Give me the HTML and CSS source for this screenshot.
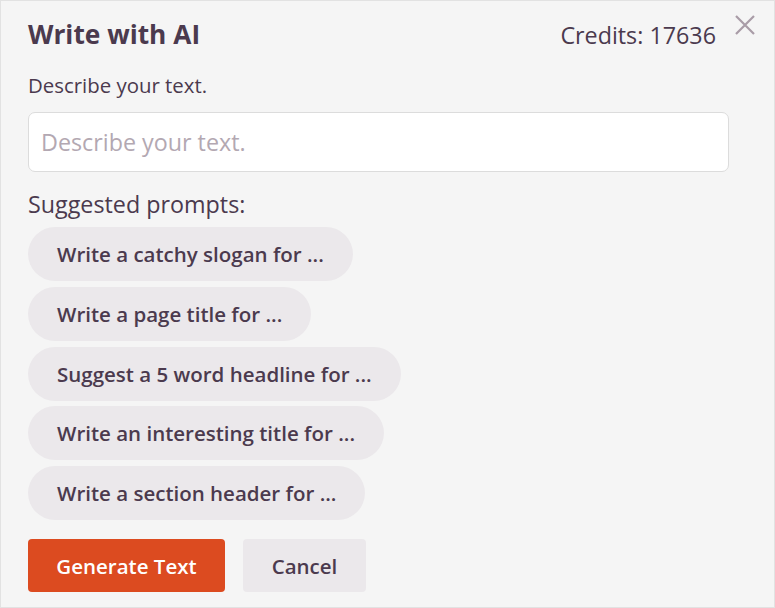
FILE: index.html
```html
<!DOCTYPE html>
<html>
<head>
<meta charset="utf-8">
<link rel="stylesheet" href="styles.css">
</head>
<body>
<div class="panel">
  <div class="header">
    <h1 class="title">Write with AI</h1>
    <div class="credits">Credits: 17636</div>
  </div>
  <button class="close" aria-label="Close">
    <svg width="22" height="22" viewBox="0 0 22 22"><path d="M2 2 L20 20 M20 2 L2 20" stroke="#a99ca7" stroke-width="2.2" fill="none"/></svg>
  </button>
  <label class="label">Describe your text.</label>
  <input class="input" type="text" placeholder="Describe your text.">
  <div class="suggest-label">Suggested prompts:</div>
  <div class="chips">
    <button class="chip">Write a catchy slogan for ...</button>
    <button class="chip">Write a page title for ...</button>
    <button class="chip">Suggest a 5 word headline for ...</button>
    <button class="chip">Write an interesting title for ...</button>
    <button class="chip">Write a section header for ...</button>
  </div>
  <div class="actions">
    <button class="btn primary">Generate Text</button>
    <button class="btn secondary">Cancel</button>
  </div>
</div>
</body>
</html>
```

FILE: styles.css
```css
html, body {
  margin: 0;
  padding: 0;
}
body {
  background: #f5f5f5;
  font-family: "Open Sans", "Noto Sans", sans-serif;
  color: #4b3a4e;
}
.panel {
  position: relative;
  box-sizing: border-box;
  width: 775px;
  height: 608px;
  border: 1px solid #e2e2e2;
  background: #f5f5f5;
  padding: 15px 46px 0 27px;
  display: flex;
  flex-direction: column;
}
.header {
  display: flex;
  justify-content: space-between;
  align-items: baseline;
  padding-right: 12px;
}
.title {
  margin: 0;
  font-size: 26.3px;
  font-weight: 700;
  line-height: 36px;
  color: #4b3a4e;
}
.credits {
  font-size: 23.3px;
  line-height: 36px;
  color: #4b3a4e;
}
.close {
  position: absolute;
  top: 13px;
  right: 18px;
  border: 0;
  background: transparent;
  padding: 0;
  width: 22px;
  height: 22px;
  cursor: pointer;
}
.close svg { display: block; }
.label {
  margin-top: 19px;
  font-size: 20.4px;
  line-height: 26px;
  color: #4b3a4e;
}
.input {
  margin-top: 14px;
  box-sizing: border-box;
  width: 701px;
  height: 60px;
  border: 1px solid #dcdcdc;
  border-radius: 7px;
  background: #fff;
  padding: 0 12px;
  font-family: "Open Sans", "Noto Sans", sans-serif;
  font-size: 23.3px;
  color: #4b3a4e;
  outline: none;
}
.input::placeholder {
  color: #b3a8b2;
}
.suggest-label {
  margin-top: 16px;
  font-size: 23.3px;
  line-height: 32px;
}
.chips {
  margin-top: 7px;
  display: flex;
  flex-direction: column;
  align-items: flex-start;
  gap: 5.75px;
}
.chip {
  height: 54px;
  border: 0;
  border-radius: 27px;
  background: #ebe8eb;
  padding: 0 29px;
  font-family: "Open Sans", "Noto Sans", sans-serif;
  font-size: 20.5px;
  font-weight: 600;
  color: #4b3a4e;
  cursor: pointer;
}
.actions {
  margin-top: 19px;
  display: flex;
  gap: 18px;
}
.btn {
  height: 53px;
  border: 0;
  border-radius: 4px;
  font-family: "Open Sans", "Noto Sans", sans-serif;
  font-size: 20.5px;
  font-weight: 600;
  cursor: pointer;
}
.primary {
  width: 197px;
  background: #dc4b20;
  color: #fff;
}
.secondary {
  width: 123px;
  background: #ebe8eb;
  color: #4b3a4e;
}
```
